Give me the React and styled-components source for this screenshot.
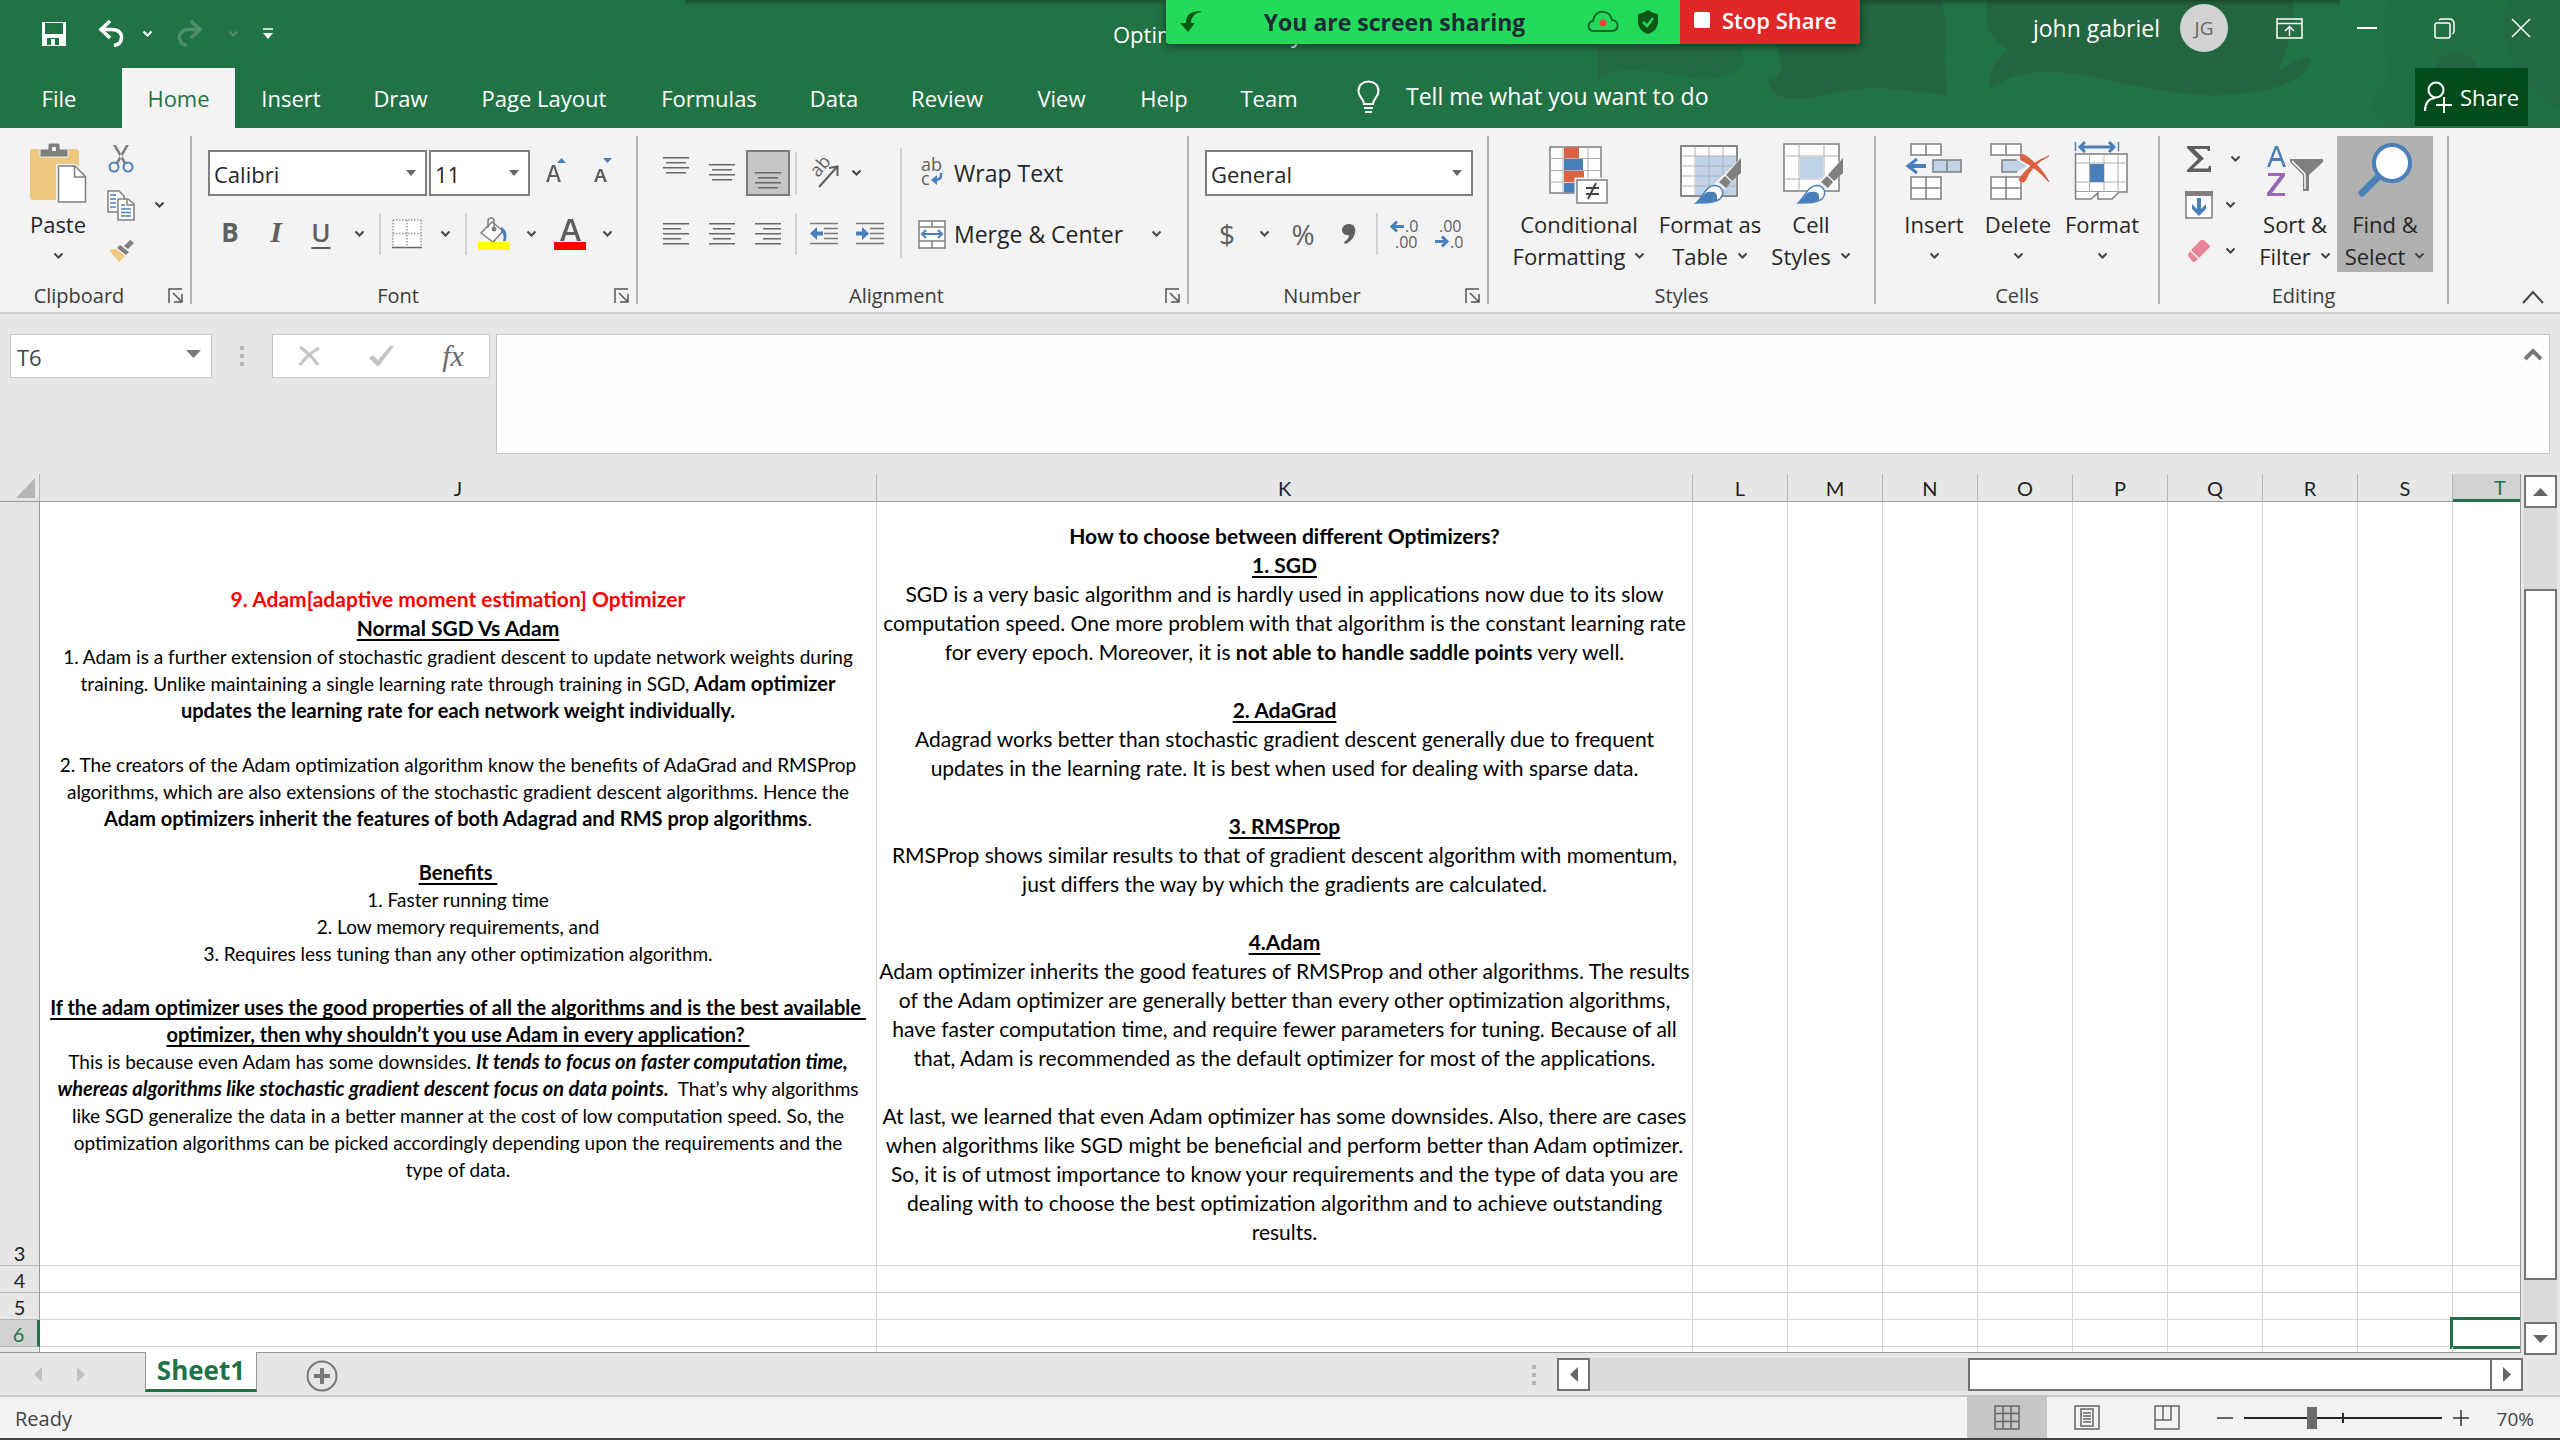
import React, { useState } from "react";
import styled, { createGlobalStyle, css } from "styled-components";

const ui = `"Open Sans", "Noto Sans", sans-serif`;
const sheetFont = `Lato, "Open Sans", sans-serif`;
const green = "#217346";
const grey = "#7f7f7f";
const blue = "#4a80b9";
const paleBlue = "#bfd2e8";
const orange = "#da6142";

const Global = createGlobalStyle`
  * { box-sizing: border-box; }
  body { margin: 0; font-family: ${ui}; font-size: 22px; color: #262626; }
  button, input, select, textarea { font: inherit; color: inherit; margin: 0; padding: 0; border: 0; border-radius: 0; background: none; outline: none; }
  svg { display: block; flex: none; overflow: visible; }
`;

const Window = styled.div`
  display: flex;
  flex-direction: column;
  height: 100vh;
  overflow: hidden;
  background: #e6e6e6;
`;

/* ---------- title bar and tabs ---------- */
const Header = styled.header`
  position: relative;
  background: ${green};
  color: #fff;
`;
const Waves = styled.svg`
  position: absolute;
  top: 0;
  right: 0;
`;
const TopShade = styled.div`
  position: absolute;
  top: 0;
  left: 685px;
  right: 220px;
  height: 6px;
  background: linear-gradient(rgba(0, 0, 0, 0.28), rgba(0, 0, 0, 0));
`;
const TitleBar = styled.div`
  position: relative;
  display: grid;
  grid-template-columns: 1fr 334px 1fr;
  align-items: center;
  height: 68px;
`;
const QuickAccess = styled.div`
  display: flex;
  align-items: center;
  padding-left: 32px;
`;
const IconButton = styled.button`
  display: flex;
  align-items: center;
  justify-content: center;
  flex: none;
  width: ${(p) => p.$w}px;
  height: 44px;
`;
const Title = styled.h1`
  margin: 0;
  font-size: 22px;
  font-weight: 400;
  line-height: 32px;
  white-space: nowrap;
`;
const Account = styled.div`
  display: flex;
  align-items: center;
  justify-content: flex-end;
  padding-bottom: 12px;
  font-size: 23px;
`;
const Avatar = styled.span`
  display: flex;
  align-items: center;
  justify-content: center;
  width: 48px;
  height: 48px;
  margin: 0 22px 0 20px;
  border-radius: 50%;
  background: #d2d2d2;
  color: #666;
  font-size: 19px;
`;
const TabRow = styled.nav`
  position: relative;
  display: flex;
  height: 60px;
`;
const Tab = styled.button`
  flex: none;
  width: ${(p) => p.$w}px;
  background: ${(p) => (p.$active ? "#f3f3f3" : "none")};
  color: ${(p) => (p.$active ? green : "#fff")};
`;
const FileTab = styled(Tab)`
  padding-right: 4px;
`;
const TellMe = styled.button`
  display: flex;
  align-items: center;
  gap: 26px;
  padding: 0 0 4px 34px;
  font-size: 23px;
`;
const Share = styled.button`
  display: flex;
  align-items: center;
  gap: 8px;
  height: 58px;
  margin: 0 32px 0 auto;
  padding: 0 9px;
  background: #004b1c;
`;

const ShareBar = styled.div`
  position: absolute;
  top: 0;
  left: 1166px;
  display: flex;
  height: 44px;
  color: #1f2a37;
  background: #23da5b;
  box-shadow: 0 2px 8px rgba(0, 0, 0, 0.5);
  border-radius: 0 0 4px 4px;
  z-index: 2;
`;
const ShareStatus = styled.div`
  display: flex;
  align-items: center;
  width: 514px;
  padding: 0 21px 0 14px;
  font-size: 23px;
  font-weight: 700;
`;
const ShareText = styled.span`
  flex: 1;
  text-align: center;
`;
const ShareIcons = styled.span`
  display: flex;
  align-items: center;
  gap: 18px;
`;
const StopShare = styled.button`
  display: flex;
  align-items: center;
  gap: 12px;
  width: 180px;
  padding: 0 14px 4px;
  background: #e02828;
  color: #fff;
  font-weight: 600;
  border-radius: 0 0 4px 0;
`;

/* ---------- ribbon ---------- */
const Ribbon = styled.div`
  position: relative;
  display: flex;
  height: 186px;
  padding: 8px 0;
  background: #f3f3f3;
  border-bottom: 2px solid #cfcfcf;
`;
const Group = styled.section`
  display: grid;
  grid-template-rows: 1fr 16px;
  flex: none;
  width: ${(p) => p.$w}px;
  border-right: 2px solid #b1b1b1;
`;
const GroupBody = styled.div`
  display: flex;
  align-items: flex-start;
  padding-left: 16px;
`;
const GroupFooter = styled.div`
  display: flex;
  align-items: center;
  height: 16px;
  font-size: 20px;
  line-height: 16px;
  color: #3b3b3b;
`;
const GroupName = styled.span`
  flex: 1;
  text-align: center;
`;
const Launcher = styled.button`
  display: flex;
  justify-content: center;
  width: 32px;
  padding-left: 4px;
`;
const Rows = styled.div`
  display: flex;
  flex-direction: column;
  gap: 15px;
  padding-top: 14px;
`;
const TightRows = styled.div`
  display: flex;
  flex-direction: column;
  width: ${(p) => p.$w}px;
`;
const Row = styled.div`
  display: flex;
  height: 46px;
`;
const Tool = styled.button`
  display: flex;
  align-items: center;
  justify-content: center;
  flex: none;
  width: ${(p) => p.$w}px;
  height: 46px;
  color: #5f5f5f;
  font-size: 26px;
  ${(p) =>
    p.$on &&
    css`
      background: #c5c5c5;
      border: 2px solid #7b7b7b;
    `}
`;
const SignTool = styled(Tool)`
  font-size: 28px;
`;
const BoldTool = styled(Tool)`
  padding-bottom: 4px;
  font-weight: 700;
`;
const ItalicTool = styled(Tool)`
  padding-bottom: 4px;
  font: italic 700 30px "Liberation Serif", serif;
`;
const UnderTool = styled(Tool)`
  padding-bottom: 4px;
  font-weight: 600;
  text-decoration: underline;
  text-underline-offset: 5px;
  text-decoration-thickness: 2px;
`;
const Rule = styled.span`
  display: flex;
  justify-content: center;
  flex: none;
  width: ${(p) => p.$w}px;
  &::before {
    content: "";
    width: 2px;
    height: ${(p) => p.$h || 42}px;
    margin-top: ${(p) => (p.$h ? 12 : 2)}px;
    background: #d2d2d2;
  }
`;
const Combo = styled.span`
  display: grid;
  align-items: center;
  flex: none;
  width: ${(p) => p.$w}px;
  height: 46px;
  margin-right: ${(p) => p.$gap || 0}px;
  & > * { grid-area: 1 / 1; }
  & > svg { justify-self: end; margin: 0 11px 0 0; pointer-events: none; }
`;
const ComboSelect = styled.select`
  appearance: none;
  width: 100%;
  height: 46px;
  padding: 2px 4px 0;
  border: 2px solid ${grey};
  background: #fff;
`;
const WideTool = styled.button`
  display: flex;
  align-items: center;
  gap: 6px;
  width: ${(p) => p.$w}px;
  height: 46px;
  padding-left: 8px;
  font-size: 23px;
  white-space: nowrap;
`;
const WideIcon = styled.span`
  display: flex;
  justify-content: center;
  width: 32px;
`;
const Big = styled.button`
  display: flex;
  flex-direction: column;
  align-items: center;
  flex: none;
  width: ${(p) => p.$w}px;
  height: 136px;
  line-height: 32px;
  white-space: nowrap;
  background: ${(p) => (p.$on ? "#b0b0b0" : "none")};
`;
const BigIcon = styled.span`
  display: flex;
  align-items: flex-start;
  height: 72px;
  padding-top: 6px;
`;
const BigLine = styled.span`
  display: flex;
  align-items: center;
  gap: 9px;
  height: 32px;
`;
const Collapse = styled.button`
  align-self: flex-end;
  margin: 0 16px 0 auto;
`;

/* ---------- formula bar ---------- */
const FormulaBar = styled.div`
  display: flex;
  align-items: flex-start;
  padding: 20px 10px 20px;
`;
const NameBox = styled.div`
  display: flex;
  align-items: center;
  width: 202px;
  height: 44px;
  border: 1px solid #c6c6c6;
  background: #fff;
`;
const NameInput = styled.input`
  flex: 1;
  min-width: 0;
  padding: 2px 0 0 6px;
  color: #444;
`;
const NameArrow = styled.button`
  padding: 0 10px 4px;
`;
const Grip = styled.span`
  display: flex;
  flex-direction: column;
  justify-content: center;
  gap: 4px;
  width: ${(p) => p.$w}px;
  height: 44px;
  align-items: center;
  &::before, &::after, & > i { content: ""; width: 4px; height: 4px; background: #b5b5b5; }
`;
const FormulaTools = styled.div`
  display: flex;
  align-items: center;
  justify-content: center;
  gap: 18px;
  width: 218px;
  height: 44px;
  border: 1px solid #c6c6c6;
  background: #fff;
`;
const Fx = styled.button`
  width: 54px;
  color: #6a6a6a;
  font: italic 30px/40px "Liberation Serif", serif;
`;
const FormulaField = styled.div`
  display: flex;
  align-items: flex-start;
  flex: 1;
  height: 120px;
  margin-left: 6px;
  border: 1px solid #c6c6c6;
  background: #fdfdfd;
`;
const FormulaText = styled.textarea`
  flex: 1;
  height: 100%;
  resize: none;
`;
const FormulaFold = styled.button`
  padding: 13px 6px;
`;

/* ---------- sheet ---------- */
const SheetArea = styled.main`
  display: flex;
  flex: 1;
  min-height: 0;
`;
const Pane = styled.div`
  flex: 1;
  min-width: 0;
  overflow: hidden;
  border-right: 1px solid #999;
  border-bottom: 1px solid #999;
`;
const Grid = styled.table`
  width: 2548px;
  table-layout: fixed;
  border-collapse: separate;
  border-spacing: 0;
  background: #fff;
  font-family: ${sheetFont};
  color: #000;
`;
const HeadCell = styled.th`
  height: 28px;
  padding: 0;
  font-size: 20px;
  font-weight: 400;
  line-height: 24px;
  color: ${(p) => (p.$on ? green : "#222")};
  background: ${(p) => (p.$on ? "#d2d2d2" : "#e6e6e6")};
  border-right: 1px solid #b5b5b5;
  border-bottom: ${(p) => (p.$on ? `3px solid ${green}` : "1px solid #999")};
`;
const Corner = styled.th`
  padding: 4px 4px 3px;
  background: #e6e6e6;
  border-right: 1px solid #b5b5b5;
  border-bottom: 1px solid #999;
  & > svg { margin-left: auto; }
`;
const RowHead = styled.th`
  height: 27px;
  padding: 0;
  vertical-align: bottom;
  font-size: 20px;
  font-weight: 400;
  line-height: 24px;
  color: ${(p) => (p.$on ? green : "#222")};
  background: ${(p) => (p.$on ? "#d2d2d2" : "#e6e6e6")};
  border-right: ${(p) => (p.$on ? `3px solid ${green}` : "1px solid #999")};
  border-bottom: 1px solid #b5b5b5;
`;
const Cell = styled.td`
  position: relative;
  padding: 0;
  text-align: center;
  vertical-align: middle;
  border-right: 1px solid #d4d4d4;
  border-bottom: 1px solid #d4d4d4;
  ${(p) =>
    p.$on &&
    css`
      &::after {
        content: "";
        position: absolute;
        inset: -3px -2px -3px -3px;
        border: 3px solid ${green};
      }
    `}
`;
const Note = styled.div`
  padding: 19px 0;
  font-size: ${(p) => p.$size}px;
  line-height: ${(p) => p.$line}px;
  white-space: pre;
  & b, & u { font-size: ${(p) => p.$bold}px; line-height: 1; }
`;
const Heading = styled.div`
  line-height: 29px;
  color: ${(p) => (p.$red ? "#f00" : "#000")};
  && b, && u { font-size: 21px; }
`;
const Line = styled.div`
  height: ${(p) => p.$line}px;
`;
const Strong = styled.b`
  font-weight: 700;
  font-style: ${(p) => (p.$it ? "italic" : "normal")};
`;
const Under = styled.u`
  font-weight: 700;
  text-underline-offset: 3px;
  text-decoration-thickness: 2px;
  text-decoration-skip-ink: none;
`;

/* ---------- scroll bars ---------- */
const VBar = styled.div`
  display: flex;
  flex-direction: column;
  width: 33px;
  margin: 1px 3px -2px 3px;
  background: #dadada;
`;
const HBar = styled.div`
  display: flex;
  width: 966px;
  height: 33px;
  background: #dadada;
`;
const ScrollButton = styled.button`
  display: flex;
  align-items: center;
  justify-content: center;
  flex: none;
  width: 33px;
  height: 33px;
  border: 2px solid #737373;
  background: #fff;
`;
const VThumb = styled.div`
  flex: 690;
  border: 2px solid #737373;
  background: #fff;
`;
const HThumb = styled.div`
  flex: 521;
  margin-right: -2px;
  border: 2px solid #737373;
  background: #fff;
`;
const Track = styled.div`
  flex: ${(p) => p.$n};
`;

/* ---------- sheet tabs and status bar ---------- */
const SheetBar = styled.div`
  display: flex;
  height: 44px;
  padding-right: 37px;
  border-bottom: 2px solid #c6c6c6;
`;
const SheetNav = styled.div`
  display: flex;
  align-items: center;
  gap: 35px;
  width: 145px;
  padding-left: 34px;
`;
const SheetTab = styled.button`
  width: 112px;
  height: 40px;
  margin-top: -1px;
  padding-bottom: 2px;
  color: ${green};
  font-size: 26px;
  font-weight: 700;
  line-height: 32px;
  background: #fff;
  border: solid #999;
  border-width: 0 1px;
  border-bottom: 3px solid ${green};
`;
const AddSheet = styled.button`
  margin: 3px auto 0 49px;
`;
const SheetScroll = styled.div`
  display: flex;
  align-items: center;
  padding-top: 1px;
`;
const StatusBar = styled.footer`
  display: flex;
  align-items: center;
  height: 43px;
  padding-left: 15px;
  background: #f3f3f3;
  border-bottom: 2px solid #444;
  font-size: 20px;
  color: #444;
`;
const Ready = styled.span`
  margin-right: auto;
  padding-top: 2px;
`;
const ViewButton = styled.button`
  display: flex;
  align-items: center;
  justify-content: center;
  width: 80px;
  height: 41px;
  background: ${(p) => (p.$on ? "#c6c6c6" : "none")};
`;
const ZoomStep = styled.button`
  display: flex;
  justify-content: center;
  width: 36px;
`;
const ZoomTrack = styled.label`
  display: flex;
  align-items: center;
  width: 198px;
  margin: 0 1px;
  height: 24px;
  background: linear-gradient(#262626, #262626) center / 2px 10px no-repeat;
`;
const ZoomRange = styled.input`
  appearance: none;
  width: 198px;
  height: 24px;
  background: linear-gradient(#262626, #262626) center / 100% 2px no-repeat;
  &::-webkit-slider-thumb { appearance: none; width: 10px; height: 22px; background: #6a6a6a; }
`;
const ZoomLabel = styled.span`
  width: 81px;
  padding: 2px 26px 0 0;
  text-align: right;
  font-size: 19px;
`;

/* ---------- drawings ---------- */
const Svg = ({ w, h, children, ...rest }) => (
  <svg width={w} height={h} viewBox={`0 0 ${w} ${h}`} fill="none" aria-hidden="true" {...rest}>
    {children}
  </svg>
);
const Chevron = ({ color = "#444" }) => (
  <Svg w={11} h={8}>
    <path d="M1.5 1.5 5.5 5.5 9.5 1.5" stroke={color} strokeWidth="2" />
  </Svg>
);
const Down = ({ w = 10, color = "#666" }) => (
  <Svg w={w} h={6}>
    <path d={`M0 0H${w}L${w / 2} 6Z`} fill={color} />
  </Svg>
);
const Triangle = ({ dir, color = "#666" }) => {
  const d = { up: "M0 8 7.500 0 15 8Z", down: "M0 0H15L7.500 8Z", left: "M8 0V15L0 7.500Z", right: "M0 0V15L8 7.500Z" }[dir];
  const tall = dir === "left" || dir === "right";
  return (
    <Svg w={tall ? 8 : 15} h={tall ? 15 : 8}>
      <path d={d} fill={color} />
    </Svg>
  );
};
const ChevronTool = ({ w, label }) => (
  <Tool $w={w} aria-label={label}>
    <Chevron />
  </Tool>
);
const Lines = ({ rows, y = 0, h = 28 }) => (
  <Svg w={26} h={h}>
    {rows.map(([x, w], i) => (
      <rect key={i} x={x} y={y + i * 5} width={w} height="1.500" fill="#666" />
    ))}
  </Svg>
);
const Indent = ({ out }) => (
  <Svg w={28} h={24}>
    <path d="M0 1.500H28M14 6.500H28M14 11.500H28M14 16.500H28M0 21.500H28" stroke="#777" strokeWidth="1.500" />
    <path d={out ? "M0 11.500 7 5V9.500H13V13.500H7V18Z" : "M13 11.500 6 5V9.500H0V13.500H6V18Z"} fill={blue} />
  </Svg>
);
const Brush = ({ x, y }) => (
  <g transform={`translate(${x} ${y})`}>
    <path d="M46-1V14L32 27 25 34 22 44 0 46 22 22Z" fill="#f3f3f3" stroke="none" />
    <path d="M45 0V15L36 23 30 17Z" fill={grey} />
    <path d="M29 18 35 24 30 30 23 24Z" fill={grey} />
    <path d="M0 45C7 39 10 28 18 27.500 25 27 28 33 26 38 23 45 12 45 0 45Z" fill="#fff" stroke={blue} strokeWidth="1.500" />
    <path d="M0 45C7 39 9 32 15 34 19 33 22 36 21 42 16 45 9 45 0 45Z" fill={blue} />
  </g>
);

const SaveIcon = () => (
  <Svg w={26} h={26}>
    <path d="M1 1H25V25H1Z" fill="#fff" />
    <path d="M4 2H22V13H4ZM6 17H18V24H14V18H10V24H6Z" fill={green} />
    <path d="M7 18H10V24H7Z" fill={green} />
  </Svg>
);
const UndoIcon = ({ flip, color }) => (
  <Svg w={28} h={28}>
    <g transform={flip ? "translate(28 0) scale(-1 1)" : undefined} stroke={color} strokeWidth="3.500">
      <path d="M3 9.500H15C22 9.500 25 14 24.500 18 24 22.500 21 25 17 25.500" />
      <path d="M13 1 4 9.500 13 18" />
    </g>
  </Svg>
);
const CutIcon = () => (
  <Svg w={26} h={30}>
    <path d="M5 1 8 1 19 20 16 20ZM21 1 18 1 7 20 10 20Z" fill={grey} />
    <circle cx="6" cy="23" r="4.500" stroke={blue} strokeWidth="2" />
    <circle cx="20" cy="23" r="4.500" stroke={blue} strokeWidth="2" />
  </Svg>
);
const CopyIcon = () => (
  <Svg w={28} h={31}>
    <path d="M1 1H12L17 6V22H1Z" fill="#fff" stroke={grey} strokeWidth="1.500" />
    <path d="M3 5H9M3 9H9M3 13H9M3 17H9" stroke={blue} strokeWidth="1.500" />
    <path d="M11 9H21L27 14V30H11Z" fill="#fff" stroke={grey} strokeWidth="1.500" />
    <path d="M20 9V15H27" stroke={grey} strokeWidth="1.500" />
    <path d="M14 15H18M14 19H24M14 22.500H24M14 26H24" stroke={blue} strokeWidth="1.500" />
  </Svg>
);
const PainterIcon = () => (
  <Svg w={25} h={22}>
    <path d="M21 0 25 3 19 9 15 6Z" fill={grey} />
    <path d="M11 5 20 12 17 15 8 8Z" fill={grey} />
    <path d="M7 9 16 16 10 22 0 10Z" fill="#edc87e" />
  </Svg>
);
const PasteIcon = () => (
  <Svg w={56} h={62}>
    <rect x="0" y="7" width="49" height="51" rx="3" fill="#edc87e" />
    <path d="M10 7H18V3Q18 1 20 1H28Q30 1 30 3V7H38V15H10Z" fill={grey} stroke="#f3f3f3" />
    <rect x="22" y="5" width="4" height="4" fill="#f3f3f3" />
    <path d="M28 24H45L56 34V61H28Z" fill="#fff" stroke="#f3f3f3" strokeWidth="4" />
    <path d="M28.500 24H45L55.500 34.500V60H28.500Z" fill="#fff" stroke={grey} strokeWidth="1.500" />
    <path d="M44.500 24V35H55" stroke={grey} strokeWidth="1.500" />
  </Svg>
);
const BordersIcon = () => (
  <Svg w={30} h={30}>
    <rect x="1" y="1" width="28" height="27" fill="#fff" />
    <path d="M1 1H29M1 14.500H29M1 1V28M15 1V28M29 1V28" stroke="#999" strokeWidth="1.500" strokeDasharray="1.500 1.500" />
    <path d="M0 28.500H30" stroke="#666" strokeWidth="1.500" />
  </Svg>
);
const FillIcon = () => (
  <Svg w={32} h={34}>
    <path d="M3 16 14 5 25 14 15 25Z" fill="#fff" stroke={grey} strokeWidth="1.500" />
    <path d="M10 11V4Q10 1 13 1 16 1 16 4V12" stroke={grey} strokeWidth="1.500" />
    <circle cx="16" cy="12" r="2.500" fill={grey} />
    <path d="M23 10Q30 12 28 24H25Q27 17 23 15Z" fill={blue} />
    <rect y="25" width="32" height="8" fill="#ff0" />
  </Svg>
);
const FontColorIcon = () => (
  <Svg w={32} h={34}>
    <path d="M6 24 14 2H19L27 24H23L21 18H12L10 24ZM13 15H20L16.500 5Z" fill="#5f5f5f" />
    <rect y="25" width="32" height="8" fill="#f00" />
  </Svg>
);
const GrowIcon = ({ down }) => (
  <Svg w={24} h={30}>
    {down ? (
      <path d="M6 24 11 11H14L19 24H16L15 20H10L9 24ZM10.500 18H14L12.500 13Z" fill="#5f5f5f" />
    ) : (
      <path d="M4 24 10 7H13L19 24H16L15 19H8L7 24ZM9 17H14L11.500 9Z" fill="#5f5f5f" />
    )}
    <path d={down ? "M15 0H24L19.500 5Z" : "M15 5H24L19.500 0Z"} fill={blue} />
  </Svg>
);
const OrientIcon = () => (
  <Svg w={30} h={30}>
    <text transform="translate(9 20) rotate(-50)" fontSize="18" fontFamily="Open Sans, sans-serif" fill="#5f5f5f">ab</text>
    <path d="M10 29 28 9M20 10 28.500 8.500V18" stroke="#5f5f5f" strokeWidth="2" />
  </Svg>
);
const WrapIcon = () => (
  <Svg w={24} h={30}>
    <text x="1" y="13" fontSize="18" fontFamily="Open Sans, sans-serif" fill="#5f5f5f">ab</text>
    <text x="1" y="27" fontSize="18" fontFamily="Open Sans, sans-serif" fill="#5f5f5f">c</text>
    <path d="M21 15V17Q21 22 15 22" stroke={blue} strokeWidth="2.500" />
    <path d="M11 22 17 17V27Z" fill={blue} />
  </Svg>
);
const MergeIcon = () => (
  <Svg w={28} h={29}>
    <path d="M1 1H27V28H1Z" fill="#fff" stroke={grey} strokeWidth="1.500" />
    <path d="M1 7H27M1 21H27M14 1V7M14 21V28" stroke={grey} strokeWidth="1.500" />
    <path d="M4 14H24M8 10 4 14 8 18M20 10 24 14 20 18" stroke={blue} strokeWidth="2" />
  </Svg>
);
const DecimalIcon = ({ less }) => (
  <Svg w={30} h={32}>
    <text x={less ? 4 : 15} y="14" fontSize="16" fontFamily="Open Sans, sans-serif" fill="#5f5f5f">{less ? ".00" : ".0"}</text>
    <text x={less ? 15 : 5} y="30" fontSize="16" fontFamily="Open Sans, sans-serif" fill="#5f5f5f">{less ? ".0" : ".00"}</text>
    {less ? (
      <path d="M0 23.500H12M7 18.500 12 23.500 7 28.500" stroke={blue} strokeWidth="3" />
    ) : (
      <path d="M2 8.500H14M7 3.500 2 8.500 7 13.500" stroke={blue} strokeWidth="3" />
    )}
  </Svg>
);
const ConditionalIcon = () => (
  <Svg w={60} h={62}>
    <rect x="1" y="5" width="51" height="46" fill="#fff" stroke={grey} strokeWidth="1.500" />
    <path d="M14 5V51M39 5V51M1 16.500H52M1 28.500H52M1 40H52" stroke="#b0b0b0" />
    <path d="M15 5.500H30V16H15ZM15 29H35V40H15Z" fill={orange} />
    <path d="M15 17H34V28H15ZM15 41H30V50.500H15Z" fill={blue} />
    <rect x="27" y="37" width="32" height="24" fill="#fff" stroke="#f3f3f3" strokeWidth="3" />
    <rect x="28" y="38" width="30" height="23" fill="#fff" stroke={grey} strokeWidth="1.500" />
    <path d="M37 46H50M37 52H50M47 41 39 57" stroke="#444" strokeWidth="2" />
  </Svg>
);
const FormatTableIcon = () => (
  <Svg w={60} h={62}>
    <rect x="1" y="4" width="56" height="50" fill="#fff" stroke={grey} strokeWidth="1.500" />
    <path d="M16 14H57V54H16Z" fill={paleBlue} />
    <path d="M15 4V54M29 4V54M43 4V54M1 14H57M1 24H57M1 34H57M1 44H57" stroke="#b0b0b0" />
    <path d="M1 54V4H57V54Z" stroke={grey} strokeWidth="1.500" />
    <Brush x={16} y={16} />
  </Svg>
);
const CellStylesIcon = () => (
  <Svg w={56} h={62}>
    <rect x="1" y="2" width="55" height="47" fill="#fff" stroke={grey} strokeWidth="1.500" />
    <path d="M16 2V49M41 2V49M1 14H56M1 37H56" stroke="#b0b0b0" />
    <path d="M17 15H40V36.500H17Z" fill={paleBlue} />
    <Brush x={15} y={16} />
  </Svg>
);
const InsertIcon = () => (
  <Svg w={58} h={60}>
    <path d="M6 2H36V13H6ZM21 2V13M6 35H36V57H6ZM21 35V57M6 46H36" fill="#fff" stroke={grey} strokeWidth="1.500" />
    <path d="M28 18H56V30H28ZM42 18V30" fill={paleBlue} stroke={grey} strokeWidth="1.500" />
    <path d="M4 24H21" stroke={blue} strokeWidth="4" />
    <path d="M12 17 3 24 12 31" stroke={blue} strokeWidth="3" />
  </Svg>
);
const DeleteIcon = () => (
  <Svg w={58} h={60}>
    <path d="M2 2H32V13H2ZM17 2V13M2 35H32V57H2ZM17 35V57M2 46H32" fill="#fff" stroke={grey} strokeWidth="1.500" />
    <path d="M28 18H13V30H28" fill={paleBlue} stroke={grey} strokeWidth="1.500" />
    <path d="M28 18 38 24 28 30Z" fill={paleBlue} />
    <path d="M34 14Q50 20 60 40M60 15Q44 24 33 39" stroke="#f3f3f3" strokeWidth="8" />
    <path d="M31 14Q34 11 37 14 52 24 60 40 48 26 32 18ZM60 14Q43 22 36 39 32 42 30 37 42 20 60 14Z" fill={orange} stroke={orange} />
  </Svg>
);
const FormatIcon = () => (
  <Svg w={56} h={60}>
    <path d="M1.500 0V9M44.500 0V9" stroke={blue} strokeWidth="1.500" />
    <path d="M6 5H40M11 0 6 5 11 10M35 0 40 5 35 10" stroke={blue} strokeWidth="3" />
    <path d="M1.500 12H53V50H1.500Z" fill="#fff" stroke={grey} strokeWidth="1.500" />
    <path d="M15.500 12V50M30 12V50M44 12V50M1.500 21H53M1.500 40H53" stroke="#b0b0b0" />
    <rect x="16" y="22" width="14" height="18" fill={blue} />
    <path d="M1.500 50V57H17L24 51V57H38L45 50" fill="#fff" stroke={grey} strokeWidth="1.500" />
  </Svg>
);
const SigmaIcon = () => (
  <Svg w={26} h={28}>
    <path d="M1 1H24V6H22L21 4H8L18 13.500 7 23.500H22L23 21H25V27H1V25L12 14 1 3Z" fill="#5f5f5f" />
  </Svg>
);
const FillDownIcon = () => (
  <Svg w={28} h={28}>
    <rect x="1" y="1" width="26" height="26" fill="#fff" stroke={grey} strokeWidth="1.500" />
    <rect x="0" y="0" width="28" height="5" fill={grey} />
    <path d="M14 7V21" stroke={blue} strokeWidth="4" />
    <path d="M7 13V18L14 25 21 18V13L14 20Z" fill={blue} />
  </Svg>
);
const EraserIcon = () => (
  <Svg w={25} h={24}>
    <path d="M14 1Q16 0 18 2L22 6Q24 8 22 9L12 19 4 11Z" fill="#e8849a" />
    <path d="M3 12 11 20 9 22Q7 24 5 22L2 18Q0 16 2 14Z" fill="#e8849a" />
  </Svg>
);
const SortIcon = () => (
  <Svg w={58} h={60}>
    <path d="M1 25 9 4H12L20 25H17L15 19H6L4 25ZM7 16H14L10.500 7Z" fill={blue} />
    <path d="M2 31H19V34L6 51H19V54H1V51L14 34H2Z" fill="#9b66b8" />
    <path d="M24 17H57V20L43 33V49H37V33L24 20Z" fill={grey} />
    <path d="M26 19 39 32V47" stroke="#fff" strokeWidth="1.500" />
  </Svg>
);
const FindIcon = () => (
  <Svg w={56} h={56}>
    <path d="M22 34 5 51" stroke={blue} strokeWidth="7" strokeLinecap="round" />
    <circle cx="35" cy="21" r="18" fill="#fff" stroke={blue} strokeWidth="4" />
  </Svg>
);
const LauncherIcon = () => (
  <Svg w={16} h={16}>
    <path d="M1 15V1H14M5 5 14 14M14 6V14H6" stroke="#555" strokeWidth="1.500" />
  </Svg>
);

const HeaderWaves = () => (
  <Waves width="970" height="128" viewBox="0 0 970 128" fill="#236640" aria-hidden="true">
    <path d="M8 42 8 78C25 66 62 70 90 76 125 84 150 74 155 60 145 40 140 0 140 0H20Z" opacity="0.6" />
    <path d="M190 0C185 30 186 50 192 66 186 84 178 80 177 78 180 94 192 100 208 99 240 96 270 84 300 89 325 92 345 92 357 97V84C350 60 362 20 350 0Z" />
    <path d="M398 0C392 30 404 40 418 50 402 62 398 76 400 89 430 66 470 70 510 78 570 92 610 98 650 94 690 90 722 76 720 58 712 54 700 66 688 70 700 45 706 20 702 0Z" />
    <path d="M846 68C848 58 856 52 866 52 878 52 886 60 887 68Z" />
    <path d="M800 0C780 40 812 60 790 90 770 110 790 128 810 128H970V0Z" opacity="0.25" />
    <path d="M920 0C900 40 930 90 970 110V0Z" opacity="0.45" />
  </Waves>
);

/* ---------- content ---------- */
const tabs = [
  ["Home", 113],
  ["Insert", 112],
  ["Draw", 107],
  ["Page Layout", 180],
  ["Formulas", 150],
  ["Data", 100],
  ["Review", 126],
  ["View", 103],
  ["Help", 102],
  ["Team", 108],
];
const columns = ["J", "K", "L", "M", "N", "O", "P", "Q", "R", "S", "T"];
const widths = [837, 816, 95, 95, 95, 95, 95, 95, 95, 95, 95];

const adamLines = [
  "1. Adam is a further extension of stochastic gradient descent to update network weights during",
  <>training. Unlike maintaining a single learning rate through training in SGD, <Strong>Adam optimizer</Strong></>,
  <Strong>updates the learning rate for each network weight individually.</Strong>,
  "",
  "2. The creators of the Adam optimization algorithm know the benefits of AdaGrad and RMSProp",
  "algorithms, which are also extensions of the stochastic gradient descent algorithms. Hence the",
  <><Strong>Adam optimizers inherit the features of both Adagrad and RMS prop algorithms</Strong>.</>,
  "",
  <Under>Benefits </Under>,
  "1. Faster running time",
  "2. Low memory requirements, and",
  "3. Requires less tuning than any other optimization algorithm.",
  "",
  <Under>If the adam optimizer uses the good properties of all the algorithms and is the best available </Under>,
  <Under>optimizer, then why shouldn’t you use Adam in every application? </Under>,
  <>This is because even Adam has some downsides. <Strong $it>It tends to focus on faster computation time,</Strong></>,
  <><Strong $it>whereas algorithms like stochastic gradient descent focus on data points.</Strong>  That’s why algorithms</>,
  "like SGD generalize the data in a better manner at the cost of low computation speed. So, the",
  "optimization algorithms can be picked accordingly depending upon the requirements and the",
  "type of data.",
];
const chooseLines = [
  <Strong>How to choose between different Optimizers?</Strong>,
  <Under>1. SGD</Under>,
  "SGD is a very basic algorithm and is hardly used in applications now due to its slow",
  "computation speed. One more problem with that algorithm is the constant learning rate",
  <>for every epoch. Moreover, it is <Strong>not able to handle saddle points</Strong> very well.</>,
  "",
  <Under>2. AdaGrad</Under>,
  "Adagrad works better than stochastic gradient descent generally due to frequent",
  "updates in the learning rate. It is best when used for dealing with sparse data.",
  "",
  <Under>3. RMSProp</Under>,
  "RMSProp shows similar results to that of gradient descent algorithm with momentum,",
  "just differs the way by which the gradients are calculated.",
  "",
  <Under>4.Adam</Under>,
  "Adam optimizer inherits the good features of RMSProp and other algorithms. The results",
  "of the Adam optimizer are generally better than every other optimization algorithms,",
  "have faster computation time, and require fewer parameters for tuning. Because of all",
  "that, Adam is recommended as the default optimizer for most of the applications.",
  "",
  "At last, we learned that even Adam optimizer has some downsides. Also, there are cases",
  "when algorithms like SGD might be beneficial and perform better than Adam optimizer.",
  "So, it is of utmost importance to know your requirements and the type of data you are",
  "dealing with to choose the best optimization algorithm and to achieve outstanding",
  "results.",
];

const NoteLines = ({ lines, line }) =>
  lines.map((text, i) => (
    <Line key={i} $line={line}>
      {text}
    </Line>
  ));

const BigButton = ({ w, on, icon, top, bottom }) => (
  <Big $w={w} $on={on}>
    <BigIcon>{icon}</BigIcon>
    <BigLine>{top}</BigLine>
    <BigLine>
      {bottom}
      <Chevron />
    </BigLine>
  </Big>
);

const RibbonGroup = ({ name, w, launcher, children }) => (
  <Group $w={w} aria-label={name}>
    <GroupBody>{children}</GroupBody>
    <GroupFooter>
      <GroupName>{name}</GroupName>
      {launcher && (
        <Launcher aria-label={`${name} settings`}>
          <LauncherIcon />
        </Launcher>
      )}
    </GroupFooter>
  </Group>
);

const Picker = ({ label, value, w, gap }) => (
  <Combo $w={w} $gap={gap}>
    <ComboSelect aria-label={label} defaultValue={value}>
      <option>{value}</option>
    </ComboSelect>
    <Down />
  </Combo>
);

export default function App() {
  const [zoom, setZoom] = useState(70);
  const [name, setName] = useState("T6");
  return (
    <Window>
      <Global />
      <Header>
        <HeaderWaves />
        <TopShade />
        <TitleBar>
          <QuickAccess>
            <IconButton $w={44} aria-label="Save"><SaveIcon /></IconButton>
            <IconButton $w={70} aria-label="Undo"><UndoIcon color="#fff" /></IconButton>
            <IconButton $w={2} aria-label="Undo history"><Chevron color="#fff" /></IconButton>
            <IconButton $w={84} aria-label="Redo"><UndoIcon flip color="#4e8f6b" /></IconButton>
            <IconButton $w={2} aria-label="Redo history"><Chevron color="#4e8f6b" /></IconButton>
            <IconButton $w={68} aria-label="Customize toolbar">
              <Svg w={10} h={12}>
                <path d="M0 1H10" stroke="#fff" strokeWidth="1.500" />
                <path d="M0 5H10L5 11Z" fill="#fff" />
              </Svg>
            </IconButton>
          </QuickAccess>
          <Title>Optimizers Theory - Excel</Title>
          <Account>
            <span>john gabriel</span>
            <Avatar>JG</Avatar>
            <IconButton $w={78} aria-label="Ribbon display options">
              <Svg w={27} h={21}>
                <path d="M1 1H26V20H1ZM1 5.500H26" stroke="#fff" strokeWidth="1.500" />
                <path d="M13.500 18V9M9 13 13.500 8.500 18 13" stroke="#fff" strokeWidth="1.500" />
              </Svg>
            </IconButton>
            <IconButton $w={78} aria-label="Minimize">
              <Svg w={20} h={2}><path d="M0 1H20" stroke="#fff" strokeWidth="2" /></Svg>
            </IconButton>
            <IconButton $w={76} aria-label="Restore">
              <Svg w={21} h={21}>
                <rect x="1" y="5" width="15" height="15" rx="2" stroke="#fff" strokeWidth="1.500" />
                <path d="M5 2Q6 1 8 1H15Q20 1 20 6V13Q20 15 18.500 16" stroke="#fff" strokeWidth="1.500" />
              </Svg>
            </IconButton>
            <IconButton $w={78} aria-label="Close">
              <Svg w={20} h={20}><path d="M1 1 19 19M19 1 1 19" stroke="#fff" strokeWidth="1.500" /></Svg>
            </IconButton>
          </Account>
        </TitleBar>
        <TabRow>
          <FileTab $w={122}>File</FileTab>
          {tabs.map(([label, w]) => (
            <Tab key={label} $w={w} $active={label === "Home"}>
              {label}
            </Tab>
          ))}
          <TellMe>
            <Svg w={23} h={33}>
              <path d="M7 24C7 19 1.500 17 1.500 11 1.500 5 6 1.500 11.500 1.500 17 1.500 21.500 5 21.500 11 21.500 17 16 19 16 24Z" stroke="#fff" strokeWidth="2" />
              <path d="M7 28H16M8 32H15" stroke="#fff" strokeWidth="2" />
            </Svg>
            Tell me what you want to do
          </TellMe>
          <Share>
            <Svg w={28} h={32}>
              <circle cx="12" cy="9" r="7.500" stroke="#fff" strokeWidth="2" />
              <path d="M1 30Q1 18 11 17M20 16V32M12 24H28" stroke="#fff" strokeWidth="2" />
            </Svg>
            Share
          </Share>
        </TabRow>
        <ShareBar>
          <ShareStatus>
            <Svg w={22} h={22}>
              <path d="M21 0C10 0 6 4 6 12H0L8 21 15 12H11C11 6 15 2 21 1Z" fill="#0b5a12" />
            </Svg>
            <ShareText>You are screen sharing</ShareText>
            <ShareIcons>
              <Svg w={32} h={24}>
                <path d="M7 21C0 21 0 12 6 11 7 4 12 1 17 2 21 2 24 6 25 10 32 10 33 21 25 21Z" stroke="#0f6b25" strokeWidth="2" />
                <circle cx="16" cy="13" r="3.500" fill="#ff4040" />
              </Svg>
              <Svg w={22} h={24}>
                <path d="M11 0Q15 3 21 4V11C21 18 17 22 11 24 5 22 1 18 1 11V4Q7 3 11 0Z" fill="#0e5518" />
                <path d="M6 12 10 16 16 8" stroke="#23da5b" strokeWidth="2.500" />
              </Svg>
            </ShareIcons>
          </ShareStatus>
          <StopShare>
            <Svg w={16} h={16}><rect width="16" height="16" rx="2" fill="#fff" /></Svg>
            Stop Share
          </StopShare>
        </ShareBar>
      </Header>

      <Ribbon>
        <RibbonGroup name="Clipboard" w={192} launcher>
          <BigButton w={84} icon={<PasteIcon />} top="Paste" />
          <TightRows $w={76}>
            <Row><Tool $w={42} aria-label="Cut"><CutIcon /></Tool></Row>
            <Row>
              <Tool $w={42} aria-label="Copy"><CopyIcon /></Tool>
              <ChevronTool w={34} label="Copy options" />
            </Row>
            <Row><Tool $w={42} aria-label="Format painter"><PainterIcon /></Tool></Row>
          </TightRows>
        </RibbonGroup>

        <RibbonGroup name="Font" w={446} launcher>
          <Rows>
            <Row>
              <Picker label="Font" value="Calibri" w={219} gap={2} />
              <Picker label="Font size" value="11" w={101} />
              <Tool $w={48} aria-label="Increase font size"><GrowIcon /></Tool>
              <Tool $w={44} aria-label="Decrease font size"><GrowIcon down /></Tool>
            </Row>
            <Row>
              <BoldTool $w={44}>B</BoldTool>
              <ItalicTool $w={48}>I</ItalicTool>
              <UnderTool $w={42}>U</UnderTool>
              <ChevronTool w={34} label="Underline options" />
              <Rule $w={8} />
              <Tool $w={46} aria-label="Borders"><BordersIcon /></Tool>
              <ChevronTool w={30} label="Border options" />
              <Rule $w={12} />
              <Tool $w={44} aria-label="Fill color"><FillIcon /></Tool>
              <ChevronTool w={30} label="Fill options" />
              <Tool $w={48} aria-label="Font color"><FontColorIcon /></Tool>
              <ChevronTool w={26} label="Font color options" />
            </Row>
          </Rows>
        </RibbonGroup>

        <RibbonGroup name="Alignment" w={551} launcher>
          <Rows>
            <Row>
              <Tool $w={44} aria-label="Top align"><Lines rows={[[0, 26], [3, 20], [0, 26], [3, 20]]} y={0} h={32} /></Tool>
              <Tool $w={48} aria-label="Middle align"><Lines rows={[[0, 26], [3, 20], [0, 26], [3, 20]]} y={6} h={30} /></Tool>
              <Tool $w={44} $on aria-label="Bottom align"><Lines rows={[[0, 26], [3, 20], [0, 26], [3, 20]]} y={14} h={30} /></Tool>
              <Rule $w={12} />
              <Tool $w={44} aria-label="Orientation"><OrientIcon /></Tool>
              <ChevronTool w={20} label="Orientation options" />
            </Row>
            <Row>
              <Tool $w={44} aria-label="Align left"><Lines rows={[[0, 26], [0, 18], [0, 26], [0, 18], [0, 26]]} h={22} /></Tool>
              <Tool $w={48} aria-label="Center"><Lines rows={[[0, 26], [4, 18], [0, 26], [4, 18], [0, 26]]} h={22} /></Tool>
              <Tool $w={44} aria-label="Align right"><Lines rows={[[0, 26], [8, 18], [0, 26], [8, 18], [0, 26]]} h={22} /></Tool>
              <Rule $w={12} />
              <Tool $w={44} aria-label="Decrease indent"><Indent out /></Tool>
              <Tool $w={48} aria-label="Increase indent"><Indent /></Tool>
            </Row>
          </Rows>
          <Rule $w={14} $h={110} />
          <Rows>
            <WideTool $w={232}><WideIcon><WrapIcon /></WideIcon>Wrap Text</WideTool>
            <Row>
              <WideTool $w={232}><WideIcon><MergeIcon /></WideIcon>Merge &amp; Center</WideTool>
              <ChevronTool w={32} label="Merge options" />
            </Row>
          </Rows>
        </RibbonGroup>

        <RibbonGroup name="Number" w={300} launcher>
          <Rows>
            <Picker label="Number format" value="General" w={268} />
            <Row>
              <SignTool $w={44}>$</SignTool>
              <ChevronTool w={30} label="Currency options" />
              <SignTool $w={48}>%</SignTool>
              <Tool $w={44} aria-label="Comma style">
                <Svg w={14} h={20}><path d="M7 0C12 0 14 4 13 9 12 14 8 18 3 20L2 18C5 16 7 14 7 11 3 12 0 9 0 6 0 3 3 0 7 0Z" fill="#5f5f5f" /></Svg>
              </Tool>
              <Rule $w={12} />
              <Tool $w={44} aria-label="Increase decimal"><DecimalIcon /></Tool>
              <Tool $w={46} aria-label="Decrease decimal"><DecimalIcon less /></Tool>
            </Row>
          </Rows>
        </RibbonGroup>

        <RibbonGroup name="Styles" w={387}>
          <BigButton w={148} icon={<ConditionalIcon />} top="Conditional" bottom="Formatting" />
          <BigButton w={114} icon={<FormatTableIcon />} top="Format as" bottom="Table" />
          <BigButton w={88} icon={<CellStylesIcon />} top="Cell" bottom="Styles" />
        </RibbonGroup>

        <RibbonGroup name="Cells" w={284}>
          <BigButton w={84} icon={<InsertIcon />} top="Insert" />
          <BigButton w={84} icon={<DeleteIcon />} top="Delete" />
          <BigButton w={84} icon={<FormatIcon />} top="Format" />
        </RibbonGroup>

        <RibbonGroup name="Editing" w={289}>
          <TightRows $w={77}>
            <Row>
              <Tool $w={46} aria-label="AutoSum"><SigmaIcon /></Tool>
              <ChevronTool w={26} label="AutoSum options" />
            </Row>
            <Row>
              <Tool $w={46} aria-label="Fill"><FillDownIcon /></Tool>
              <ChevronTool w={16} label="Fill options" />
            </Row>
            <Row>
              <Tool $w={46} aria-label="Clear"><EraserIcon /></Tool>
              <ChevronTool w={16} label="Clear options" />
            </Row>
          </TightRows>
          <BigButton w={84} icon={<SortIcon />} top="Sort &amp;" bottom="Filter" />
          <BigButton w={96} on icon={<FindIcon />} top="Find &amp;" bottom="Select" />
        </RibbonGroup>
        <Collapse aria-label="Collapse ribbon">
          <Svg w={22} h={14}><path d="M1 13 11 2 21 13" stroke="#444" strokeWidth="2" /></Svg>
        </Collapse>
      </Ribbon>

      <FormulaBar>
        <NameBox>
          <NameInput aria-label="Name box" value={name} onChange={(e) => setName(e.target.value)} />
          <NameArrow aria-label="Named ranges"><Triangle dir="down" color="#777" /></NameArrow>
        </NameBox>
        <Grip $w={60}><i /></Grip>
        <FormulaTools>
          <IconButton $w={54} aria-label="Cancel">
            <Svg w={22} h={20}><path d="M2 1Q13 9 20 19M21 2Q9 9 2 19" stroke="#c3c3c3" strokeWidth="3" /></Svg>
          </IconButton>
          <IconButton $w={54} aria-label="Enter">
            <Svg w={26} h={20}><path d="M1 12 5 9 10 14 22 0H26L11 20H9Z" fill="#c3c3c3" /></Svg>
          </IconButton>
          <Fx aria-label="Insert function">fx</Fx>
        </FormulaTools>
        <FormulaField>
          <FormulaText aria-label="Formula" />
          <FormulaFold aria-label="Collapse formula bar">
            <Svg w={20} h={12}><path d="M2 11 10 3 18 11" stroke="#777" strokeWidth="4" /></Svg>
          </FormulaFold>
        </FormulaField>
      </FormulaBar>

      <SheetArea>
        <Pane>
          <Grid>
            <colgroup>
              <col width="40" />
              {widths.map((w, i) => <col key={i} width={w} />)}
            </colgroup>
            <thead>
              <tr>
                <Corner aria-label="Select all">
                  <Svg w={19} h={20}><path d="M19 0V20H0Z" fill="#b5b5b5" /></Svg>
                </Corner>
                {columns.map((c) => <HeadCell key={c} $on={c === "T"}>{c}</HeadCell>)}
              </tr>
            </thead>
            <tbody>
              <tr>
                <RowHead>3</RowHead>
                <Cell>
                  <Note $size={19} $bold={20} $line={27}>
                    <Heading $red><Strong>9. Adam[adaptive moment estimation] Optimizer</Strong></Heading>
                    <Heading><Under>Normal SGD Vs Adam</Under></Heading>
                    <NoteLines lines={adamLines} line={27} />
                  </Note>
                </Cell>
                <Cell>
                  <Note $size={21} $bold={21} $line={29}>
                    <NoteLines lines={chooseLines} line={29} />
                  </Note>
                </Cell>
                {columns.slice(2).map((c) => <Cell key={c} />)}
              </tr>
              {[4, 5, 6, 7].map((r) => (
                <tr key={r}>
                  <RowHead $on={r === 6}>{r}</RowHead>
                  {columns.map((c) => <Cell key={c} $on={r === 6 && c === "T"} />)}
                </tr>
              ))}
            </tbody>
          </Grid>
        </Pane>
        <VBar>
          <ScrollButton aria-label="Scroll up"><Triangle dir="up" /></ScrollButton>
          <Track $n={81} />
          <VThumb />
          <Track $n={42} />
          <ScrollButton aria-label="Scroll down"><Triangle dir="down" /></ScrollButton>
        </VBar>
      </SheetArea>

      <SheetBar>
        <SheetNav>
          <button aria-label="Previous sheet"><Triangle dir="left" color="#c0c0c0" /></button>
          <button aria-label="Next sheet"><Triangle dir="right" color="#c0c0c0" /></button>
        </SheetNav>
        <SheetTab>Sheet1</SheetTab>
        <AddSheet aria-label="New sheet">
          <Svg w={32} h={32}>
            <circle cx="16" cy="16" r="14.500" stroke="#777" strokeWidth="2" />
            <path d="M16 8V24M8 16H24" stroke="#777" strokeWidth="4" />
          </Svg>
        </AddSheet>
        <SheetScroll>
          <Grip $w={46}><i /></Grip>
          <HBar>
            <ScrollButton aria-label="Scroll left"><Triangle dir="left" /></ScrollButton>
            <Track $n={379} />
            <HThumb />
            <ScrollButton aria-label="Scroll right"><Triangle dir="right" /></ScrollButton>
          </HBar>
        </SheetScroll>
      </SheetBar>

      <StatusBar>
        <Ready>Ready</Ready>
        <ViewButton $on aria-label="Normal view">
          <Svg w={26} h={25}><path d="M1 1H25V24H1ZM9 1V24M17 1V24M1 8.500H25M1 16.500H25" stroke="#666" strokeWidth="1.500" /></Svg>
        </ViewButton>
        <ViewButton aria-label="Page layout view">
          <Svg w={26} h={25}><path d="M1 1H25V24H1ZM7 4H19V21H7ZM9 8H17M9 11H17M9 14H17M9 17H17" stroke="#666" strokeWidth="1.500" /></Svg>
        </ViewButton>
        <ViewButton aria-label="Page break view">
          <Svg w={26} h={25}><path d="M1 1H25V24H1ZM1 15H17V1M9 1V15" stroke="#666" strokeWidth="1.500" /></Svg>
        </ViewButton>
        <ZoomStep aria-label="Zoom out">
          <Svg w={16} h={16}><path d="M0 8H16" stroke="#333" strokeWidth="1.500" /></Svg>
        </ZoomStep>
        <ZoomTrack>
          <ZoomRange type="range" aria-label="Zoom" min="10" max="190" value={zoom} onChange={(e) => setZoom(Number(e.target.value))} />
        </ZoomTrack>
        <ZoomStep aria-label="Zoom in">
          <Svg w={16} h={16}><path d="M0 8H16M8 0V16" stroke="#333" strokeWidth="1.500" /></Svg>
        </ZoomStep>
        <ZoomLabel>{zoom}%</ZoomLabel>
      </StatusBar>
    </Window>
  );
}
